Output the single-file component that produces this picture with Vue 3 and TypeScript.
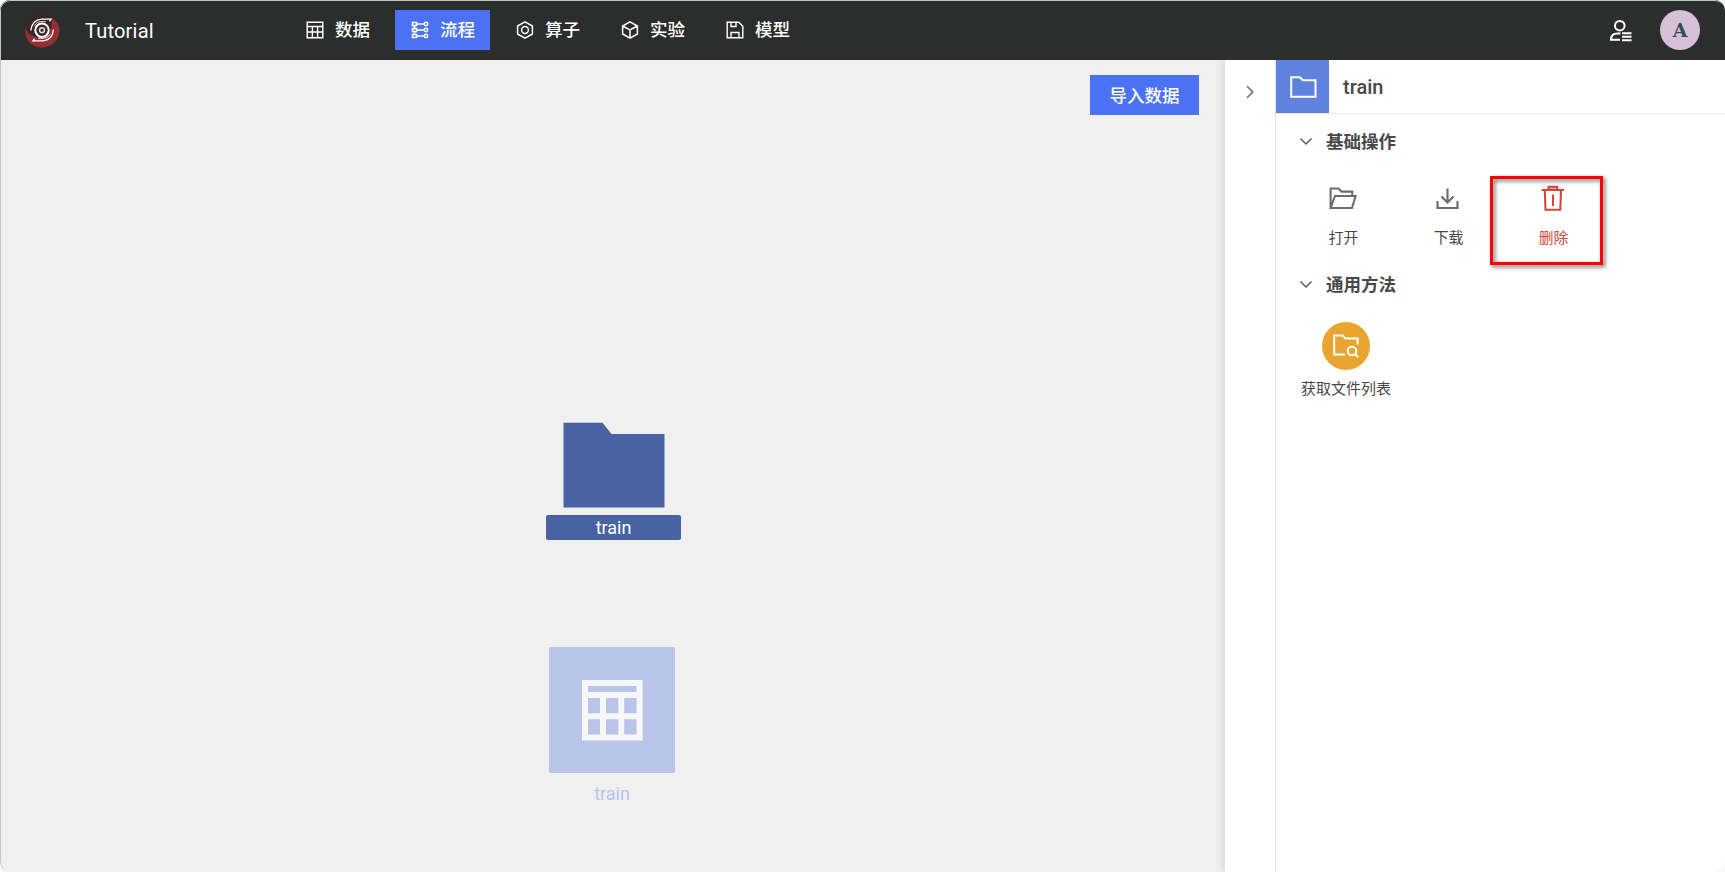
<script setup lang="ts">
import { ref } from 'vue'

interface NavItem { key: string; label: string }
interface Action { key: string; label: string; danger?: boolean }

const nav: NavItem[] = [
  { key: 'data', label: '数据' },
  { key: 'flow', label: '流程' },
  { key: 'operator', label: '算子' },
  { key: 'experiment', label: '实验' },
  { key: 'model', label: '模型' },
]
const active = ref('flow')

const actions: Action[] = [
  { key: 'open', label: '打开' },
  { key: 'download', label: '下载' },
  { key: 'delete', label: '删除', danger: true },
]
const basicOpen = ref(true)
const methodsOpen = ref(true)
</script>

<template>
  <div class="window">
    <header class="topbar">
      <svg class="logo" viewBox="0 0 36 36">
        <circle cx="18" cy="18" r="17.5" fill="#382729" />
        <path d="M27 5.2C31 8 35.500 12 35.500 18A17.500 17.500 0 0 1 2 25.200C1 22 1 18 1.500 16C4 22 8 24 12 25C20 28 31 20 27 5.200Z" fill="#923033" />
        <g fill="none" stroke="#fff">
          <circle cx="18" cy="18.200" r="6.700" stroke-width="2" />
          <circle cx="18" cy="18.200" r="2.400" stroke-width="1.500" stroke="#e6dada" />
          <path d="M7 18.500C7.500 11 12.500 7.200 18 7.200H27L25.500 9.500" stroke-width="1.300" />
          <path d="M10.500 14C12 10.500 15 9.600 18 9.600H22" stroke-width=".8" />
          <path d="M29.300 17.500C29 25 24 28.800 18 28.800H9L10.500 26.700" stroke-width="1.300" />
          <path d="M26 22.200C24.500 25.600 21 26.400 18 26.400H14" stroke-width=".8" />
        </g>
      </svg>
      <div class="brand">Tutorial</div>
      <nav class="nav">
        <button v-for="item in nav" :key="item.key" class="nav-item" :class="{ active: active === item.key }" @click="active = item.key">
          <svg class="nav-icon" viewBox="0 0 18 18" fill="none" stroke="#fff" stroke-width="1.4">
            <path v-if="item.key === 'data'" d="M1.200 1.200H16.800V16.800H1.200ZM1 5.500H17M1 11H17M6.400 5.500V17M11.600 5.500V17" />
            <g v-else-if="item.key === 'flow'" stroke-width="1.500">
              <path d="M1.500 1.500H5.500V4.500H1.500ZM1.500 7.500H5.500V10.500H1.500ZM1.500 13.500H5.500V16.500H1.500ZM3.500 4.500V7.500M3.500 10.500V13.500M5.500 3H13.500M5.500 9H13.500M5.500 15H13.500" />
              <circle cx="15" cy="3" r="1.700" /><circle cx="15" cy="9" r="1.700" /><circle cx="15" cy="15" r="1.700" />
            </g>
            <g v-else-if="item.key === 'operator'" stroke-width="1.500">
              <path d="M9 .9L16.400 5V13L9 17.100L1.600 13V5Z" /><circle cx="9" cy="9" r="3.400" />
            </g>
            <path v-else-if="item.key === 'experiment'" stroke-width="1.500" d="M9 .9L16.400 5V13L9 17.100L1.600 13V5ZM1.600 5L9 9L16.400 5M9 9V17.100" />
            <path v-else d="M1.200 1.200H12.800L16.800 5.200V16.800H1.200ZM5 1.200V5.500H10V1.200M5 16.800V11.500H13V16.800" />
          </svg>
          <span>{{ item.label }}</span>
        </button>
      </nav>
      <svg class="user" viewBox="0 0 24 24" fill="none" stroke="#fff" stroke-width="2">
        <circle cx="10.800" cy="6.700" r="4.800" />
        <path d="M11.500 14.500H8.500C4.500 14.500 2 16.700 2 20.800H11" />
        <path d="M13 14.300H22.500M13 17.800H22.500M13 21.200H22.500" stroke-width="1.900" />
      </svg>
      <div class="avatar">A</div>
    </header>

    <div class="body">
      <main class="canvas">
        <button class="import">导入数据</button>
        <div class="node node-folder">
          <svg width="102" height="86" viewBox="0 0 102 86">
            <path d="M.5 .7H39.500L48.500 12H101.500V85.500H.5Z" fill="#4862a3" />
          </svg>
          <div class="node-label">train</div>
        </div>
        <div class="node node-table">
          <div class="tile">
            <svg width="61" height="61" viewBox="0 0 61 61">
              <path fill="#f7f7f7" fill-rule="evenodd" d="M0 0H60.600V60.600H0ZM6 6V12H54.500V6ZM6 18V33.300H18V18ZM24 18V33.300H36.300V18ZM42.200 18V33.300H54.500V18ZM6 39.200V54.400H18V39.200ZM24 39.200V54.400H36.300V39.200ZM42.200 39.200V54.400H54.500V39.200Z" />
            </svg>
          </div>
          <div class="tile-label">train</div>
        </div>
      </main>

      <aside class="panel">
        <div class="rail">
          <svg width="10" height="14" viewBox="0 0 10 14"><path d="M2 1.200L7.800 7L2 12.800" fill="none" stroke="#808080" stroke-width="1.800" /></svg>
        </div>
        <div class="detail">
          <div class="detail-head">
            <div class="head-icon">
              <svg width="27" height="22" viewBox="0 0 27 22"><path d="M1.200 1.200H9.800L13 4.300H25.500V20.700H1.200Z" fill="none" stroke="#fff" stroke-width="2" /></svg>
            </div>
            <span>train</span>
          </div>

          <h3 class="section" @click="basicOpen = !basicOpen">
            <svg width="14" height="9" viewBox="0 0 14 9"><path d="M1.500 1.500L7 7L12.500 1.500" fill="none" stroke="#555" stroke-width="1.400" /></svg>
            <span>基础操作</span>
          </h3>
          <div v-if="basicOpen" class="actions">
            <div v-for="a in actions" :key="a.key" class="action" :class="{ danger: a.danger }">
              <svg width="28" height="28" viewBox="0 0 28 28" fill="none" stroke="currentColor" stroke-width="2.1">
                <path v-if="a.key === 'open'" d="M1.600 24V4.500H9.500L12.500 7.600H23.300V11.500M1.600 24L6 12H26.600L23 24Z" />
                <path v-else-if="a.key === 'download'" d="M13.500 4.500V18M7.500 12.500L13.500 18.500L19.500 12.500M3.500 17V24H23.500V17" />
                <g v-else>
                  <path d="M2.600 6H25M5.800 6.500L6.500 25.700H21.300L22 6.500M14 10.500V22" />
                  <path d="M9.600 5V2.800H18.200V5" /><path d="M10 4.200H18" opacity=".45" />
                </g>
              </svg>
              <span>{{ a.label }}</span>
              <i v-if="a.danger" class="marker"></i>
            </div>
          </div>

          <h3 class="section second" @click="methodsOpen = !methodsOpen">
            <svg width="14" height="9" viewBox="0 0 14 9"><path d="M1.500 1.500L7 7L12.500 1.500" fill="none" stroke="#555" stroke-width="1.400" /></svg>
            <span>通用方法</span>
          </h3>
          <div v-if="methodsOpen" class="method">
            <div class="method-icon">
              <svg width="28" height="26" viewBox="0 0 28 26" fill="none" stroke="#fff" stroke-width="2">
                <path d="M13 21.500H2.200V2.500H10.500L13.500 5.500H25.600V11.500" />
                <circle cx="20" cy="18" r="4.300" /><path d="M23 21L26.200 24.200" />
              </svg>
            </div>
            <span>获取文件列表</span>
          </div>
        </div>
      </aside>
    </div>
  </div>
</template>

<style>
body { background: #f8f8f8; }
</style>

<style scoped>
* { box-sizing: border-box; }
.window {
  width: 1725px; height: 872px; display: flex; flex-direction: column; position: relative;
  border-radius: 10px; overflow: hidden; background: #f0f0f0; color: #484848;
  font-family: "Roboto", "Noto Sans CJK SC", sans-serif;
}
.window::after {
  content: ""; position: absolute; inset: 0; border: 1px solid #c4c6c5;
  border-right: 0; border-bottom: 0; border-radius: 10px; pointer-events: none; z-index: 5;
}
button { border: 0; padding: 0; font: inherit; color: #fff; cursor: pointer; }
.topbar { height: 60px; flex: none; display: flex; align-items: center; padding: 0 25px 0 24px; background: #2c2e2d; color: #fff; }
.logo { width: 36px; height: 36px; }
.brand { width: 205px; margin-left: 25px; font-size: 20px; line-height: 30px; letter-spacing: .2px; padding-top: 2px; }
.nav { display: flex; gap: 10px; flex: 1; }
.nav-item { width: 95px; height: 40px; display: flex; align-items: center; padding-left: 16px; gap: 11px; background: transparent; font-size: 17.5px; font-weight: 500; line-height: 24px; }
.nav-item.active { background: #4b72f3; }
.nav-icon { width: 18px; height: 18px; }
.user { width: 24px; height: 24px; margin: 2px 27px 0 0; }
.avatar { width: 40px; height: 40px; border-radius: 50%; background: #d8bfd8; color: #2c4f55; text-align: center; font: bold 19px/40px "DejaVu Serif", serif; }
.body { flex: 1; display: flex; min-height: 0; }
.canvas { flex: 1; position: relative; }
.import { position: absolute; right: 26px; top: 15px; width: 109px; height: 40px; padding-bottom: 2px; background: #4b72f3; font-size: 17.500px; font-weight: 500; }
.node { position: absolute; display: flex; flex-direction: column; align-items: center; font-size: 18px; }
.node-folder { left: 546px; top: 362px; width: 135px; }
.node-label { width: 135px; height: 25px; margin-top: 7px; border-radius: 2px; background: #4862a3; color: #fff; text-align: center; line-height: 26px; }
.node-folder svg { flex: none; display: block; height: 86px; }
.node-folder .node-label { position: relative; top: -.5px; }
.node-table { left: 549px; top: 587px; width: 126px; }
.tile { width: 126px; height: 126px; border-radius: 2px; background: #b8c5e9; display: grid; place-items: center; }
.tile-label { margin-top: 8px; line-height: 26px; color: #b8c5e9; }
.panel { width: 500px; flex: none; display: flex; background: #fff; box-shadow: 0 0 10px rgba(0, 0, 0, .16); clip-path: inset(0 0 0 -20px); z-index: 1; }
.rail { width: 51px; border-right: 1px solid #e3e3e3; padding: 24px 0 0 20px; }
.detail { flex: 1; }
.detail-head { height: 54px; display: flex; border-bottom: 1px solid #e8e8e8; font-size: 20px; font-weight: 500; line-height: 55px; gap: 14px; }
.head-icon { width: 53px; height: 53px; background: #5f82de; display: grid; place-items: center; }
.head-icon svg { margin-left: 1px; }
.section { margin: 12px 0 0 23px; height: 28px; display: flex; align-items: center; gap: 13px; font-size: 17.500px; font-weight: 700; }
.section svg { margin-top: 2px; }
.actions { display: flex; padding-left: 15px; margin-top: 30px; height: 82px; }
.action { width: 105px; position: relative; display: flex; flex-direction: column; align-items: center; font-size: 14.800px; line-height: 20px; }
.action svg { margin-left: -1px; color: #6c6c6c; }
.action span { margin-top: 16px; }
.action.danger, .action.danger svg { color: #d4453c; }
.marker { position: absolute; left: -11px; top: -8px; width: 113px; height: 89px; border: 3px solid #f00; filter: drop-shadow(2px 2px 2px rgba(0, 0, 0, .6)); }
.second { margin-top: 3px; }
.method { width: 96px; margin: 25px 0 0 22px; display: flex; flex-direction: column; align-items: center; font-size: 15px; line-height: 20px; white-space: nowrap; }
.method-icon { width: 48px; height: 48px; border-radius: 50%; background: #e9a530; display: grid; place-items: center; }
.method span { margin-top: 9px; }
</style>
